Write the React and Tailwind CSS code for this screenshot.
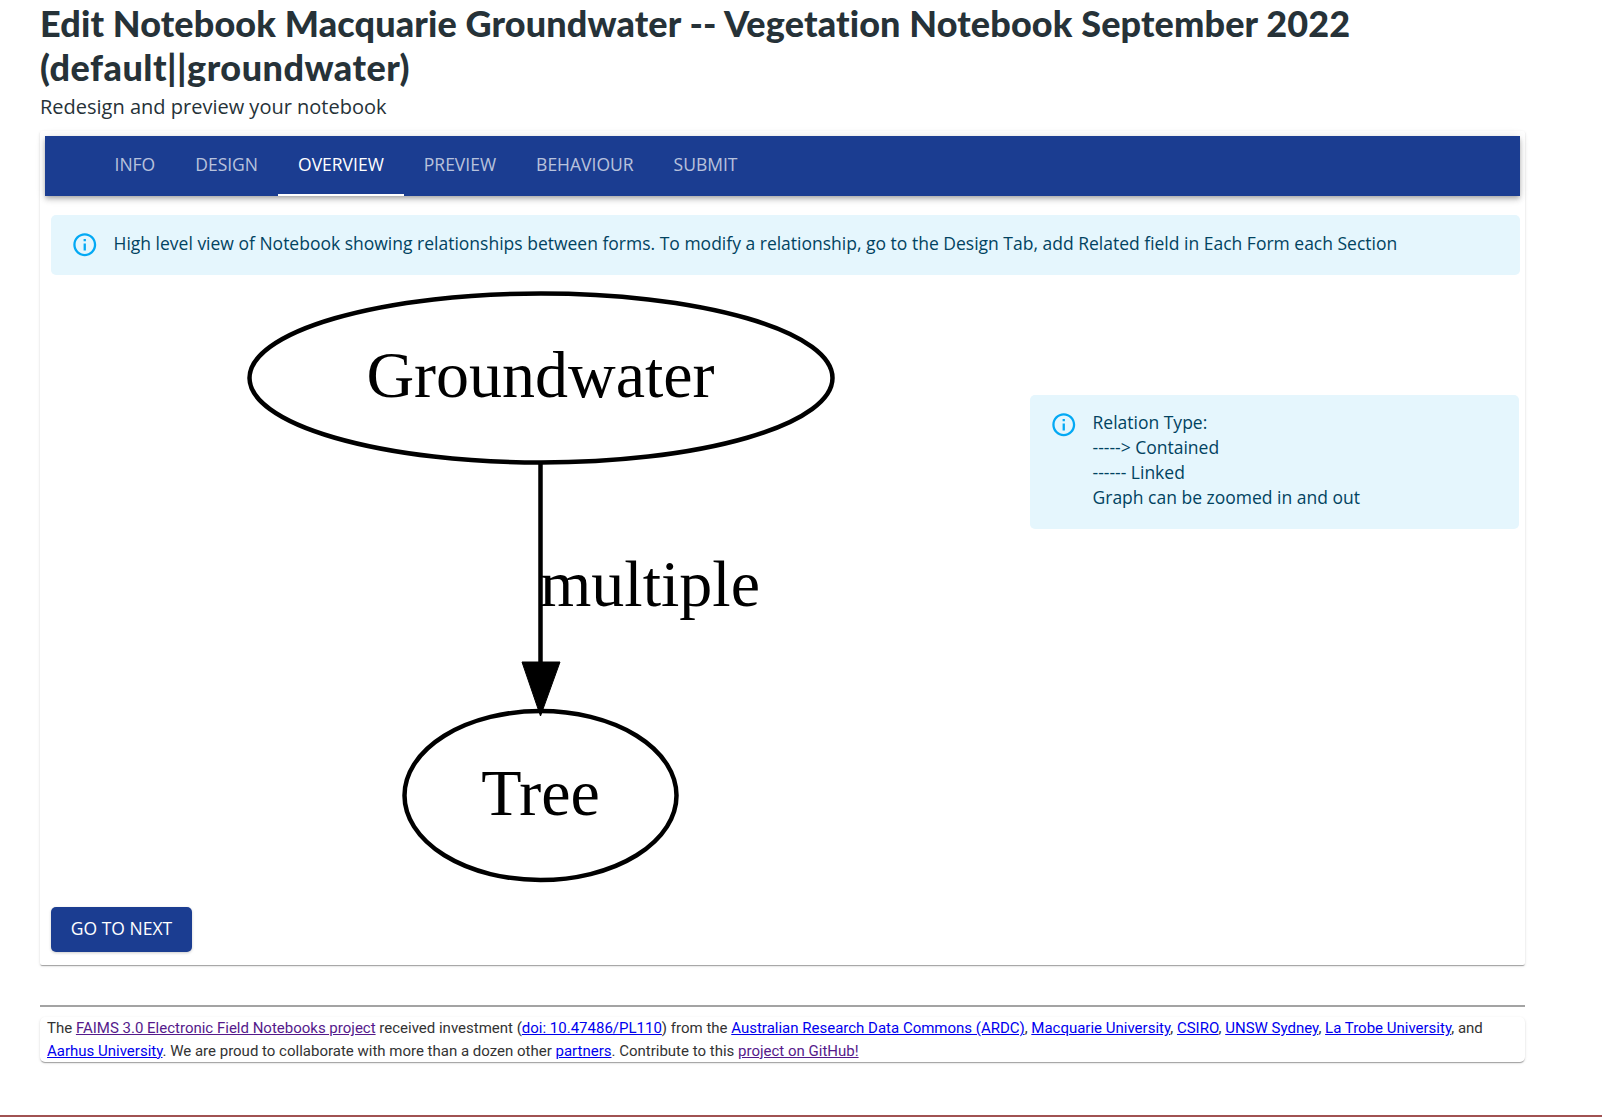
import React from 'react'

const tabs = ['Info', 'Design', 'Overview', 'Preview', 'Behaviour', 'Submit']

const InfoIcon = () => (
  <svg viewBox="0 0 24 24" className="w-[27.5px] h-[27.5px] shrink-0 fill-[#03a9f4]">
    <path d="M11 7h2v2h-2zm0 4h2v6h-2zm1-9C6.48 2 2 6.48 2 12s4.48 10 10 10 10-4.48 10-10S17.52 2 12 2zm0 18c-4.41 0-8-3.59-8-8s3.59-8 8-8 8 3.59 8 8-3.59 8-8 8z" />
  </svg>
)

const Graph = () => (
  <svg viewBox="51 276 979 632" className="w-[979px] h-[632px] shrink-0">
    <g fill="none" stroke="#000" strokeWidth="4.5">
      <ellipse cx="541" cy="379" rx="291.5" ry="84.5" />
      <ellipse cx="540.5" cy="796.5" rx="136" ry="84.5" />
      <path d="M540.5 463V668" />
    </g>
    <polygon points="522,663 560,663 540.5,717" fill="#000" stroke="#000" strokeWidth="1" />
    <g fontFamily="'Liberation Serif', serif" fontSize="66" fill="#000">
      <text x="540.5" y="398" textAnchor="middle">Groundwater</text>
      <text x="650" y="607" textAnchor="middle">multiple</text>
      <text x="540.5" y="816" textAnchor="middle">Tree</text>
    </g>
  </svg>
)

export default function App() {
  return (
    <div className="min-h-[1117px] flex flex-col bg-white font-['Open_Sans',sans-serif]">
      <div className="w-[1485px] ml-[40px]">
        <h1 className="pt-[1px] font-['Lato',sans-serif] font-black [font-variant-ligatures:none] tracking-[0.13px] text-[36px] leading-[44px] text-[#263238]">
          Edit Notebook Macquarie Groundwater -- Vegetation Notebook September 2022 <span className="tracking-[0.49px]">(default||groundwater)</span>
        </h1>
        <p className="mt-[3px] text-[20px] leading-[30px] text-[#263238]">Redesign and preview your notebook</p>

        <div className="mt-[9px] bg-white p-[5px] pb-[13px] rounded-[2px] shadow-[0_2px_1px_-1px_rgba(0,0,0,0.2),0_1px_1px_0_rgba(0,0,0,0.14),0_1px_3px_0_rgba(0,0,0,0.12)]">
          <nav className="h-[60px] flex pl-[49.5px] bg-[#1b3d91] shadow-[0_2px_4px_-1px_rgba(0,0,0,0.2),0_4px_5px_0_rgba(0,0,0,0.14),0_1px_10px_0_rgba(0,0,0,0.12)]">
            {tabs.map((t) => (
              <div
                key={t}
                className={
                  t === 'Overview'
                    ? 'flex items-center px-[20px] pb-[1px] uppercase text-[17.5px] text-white border-b-2 border-white'
                    : 'flex items-center px-[20px] pb-[1px] uppercase text-[17.5px] text-white/70 border-b-2 border-transparent'
                }
              >
                {t}
              </div>
            ))}
          </nav>

          <div className="ml-[6px] mt-[19px] h-[60px] flex items-center gap-[15px] px-[20px] rounded-[5px] bg-[#e5f6fd] text-[#014361] text-[17.5px] leading-[25px]">
            <InfoIcon />
            <span className="pb-[3px]">High level view of Notebook showing relationships between forms. To modify a relationship, go to the Design Tab, add Related field in Each Form each Section</span>
          </div>

          <div className="ml-[6px] flex items-start">
            <Graph />
            <div className="mt-[120px] w-[489px] flex gap-[15px] px-[20px] pt-[16px] pb-[19px] rounded-[5px] bg-[#e5f6fd] text-[#014361] text-[17.5px] leading-[25px]">
              <InfoIcon />
              <div className="mt-[-1px]">
                <div>Relation Type:</div>
                <div>-----&gt; Contained</div>
                <div>------ Linked</div>
                <div>Graph can be zoomed in and out</div>
              </div>
            </div>
          </div>

          <button className="ml-[6px] block h-[45px] w-[141px] pb-[2px] rounded-[5px] bg-[#1b3d91] text-white uppercase text-[17.5px] shadow-[0_1px_3px_rgba(0,0,0,0.2)]">
            Go to next
          </button>
        </div>

        <hr className="mt-[40px] border-t-2 border-[#a3a3a3]" />

        <div className="mt-[10px] px-[7px] rounded-[5px] bg-white font-['Roboto',sans-serif] text-[15px] leading-[22.5px] text-[#333] shadow-[0_2px_1px_-1px_rgba(0,0,0,0.2),0_1px_1px_0_rgba(0,0,0,0.14),0_1px_3px_0_rgba(0,0,0,0.12)]">
          The <a href="#a" className="underline text-[#551a8b]">FAIMS 3.0 Electronic Field Notebooks project</a> received investment (<a href="#b" className="underline text-[#0000ee]">doi: 10.47486/PL110</a>) from the <a href="#c" className="underline text-[#0000ee]">Australian Research Data Commons (ARDC)</a>, <a href="#d" className="underline text-[#0000ee]">Macquarie University</a>, <a href="#e" className="underline text-[#0000ee]">CSIRO</a>, <a href="#f" className="underline text-[#0000ee]">UNSW Sydney</a>, <a href="#g" className="underline text-[#0000ee]">La Trobe University</a>, and <a href="#h" className="underline text-[#0000ee]">Aarhus University</a>. We are proud to collaborate with more than a dozen other <a href="#i" className="underline text-[#0000ee]">partners</a>. Contribute to this <a href="#j" className="underline text-[#551a8b]">project on GitHub!</a>
        </div>
      </div>

      <div className="mt-auto h-[2px] bg-[#a05252]" />
    </div>
  )
}
